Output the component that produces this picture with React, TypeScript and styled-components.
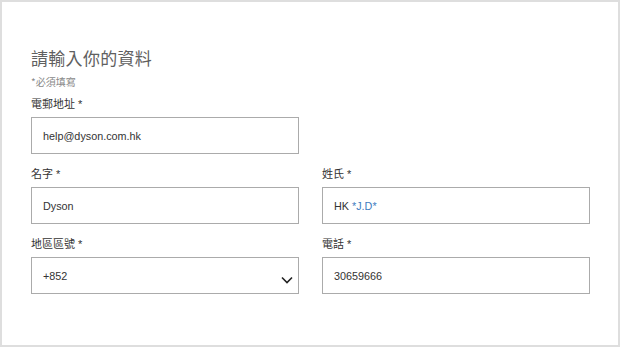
import React from 'react'
import styled, { createGlobalStyle } from 'styled-components'

const GlobalStyle = createGlobalStyle`
  html, body {
    margin: 0;
    padding: 0;
    background: #fff;
  }
  body {
    font-family: 'Liberation Sans', Arial, 'Noto Sans CJK TC', sans-serif;
  }
`

const Frame = styled.div`
  box-sizing: border-box;
  width: 620px;
  height: 347px;
  border: 2px solid #dedede;
  padding: 43px 28px 0 29px;
`

const Title = styled.h2`
  margin: 0;
  font-family: 'Noto Sans CJK TC', sans-serif;
  font-size: 17px;
  font-weight: 400;
  line-height: 26px;
  color: #606060;
  letter-spacing: 0.3px;
`

const Note = styled.div`
  margin-top: 4px;
  font-family: 'Noto Sans CJK TC', sans-serif;
  font-size: 10px;
  line-height: 14px;
  color: #8a8a8a;
`

const Grid = styled.div`
  display: grid;
  grid-template-columns: 268px 268px;
  column-gap: 23px;
  margin-top: 5px;
`

const Field = styled.div`
  display: flex;
  flex-direction: column;
`

const Label = styled.div<{ $first?: boolean }>`
  font-family: 'Liberation Sans', 'Noto Sans CJK TC', sans-serif;
  font-size: 11px;
  line-height: 16px;
  color: #333;
  padding-top: ${({ $first }) => ($first ? '2px' : '12px')};
  padding-bottom: 5px;
`

const Box = styled.div`
  position: relative;
  box-sizing: border-box;
  height: 37px;
  border: 1px solid #ababab;
  display: flex;
  align-items: center;
  padding-left: 11px;
  font-size: 10.8px;
  color: #333;
`

const Blue = styled.span`
  color: #3e7cc0;
`

const Chevron = styled.svg`
  position: absolute;
  right: 5px;
  top: 18px;
`

export default function App() {
  return (
    <>
      <GlobalStyle />
      <Frame>
        <Title>請輸入你的資料</Title>
        <Note>*必須填寫</Note>
        <Grid>
          <Field>
            <Label $first>電郵地址 *</Label>
            <Box>help@dyson.com.hk</Box>
          </Field>
          <div />
          <Field>
            <Label>名字 *</Label>
            <Box>Dyson</Box>
          </Field>
          <Field>
            <Label>姓氏 *</Label>
            <Box>
              HK&nbsp;<Blue>*J.D*</Blue>
            </Box>
          </Field>
          <Field>
            <Label>地區區號 *</Label>
            <Box>
              +852
              <Chevron width="12" height="8" viewBox="0 0 12 8">
                <path d="M1 1.5 L6 6.5 L11 1.5" fill="none" stroke="#222" strokeWidth="1.6" />
              </Chevron>
            </Box>
          </Field>
          <Field>
            <Label>電話 *</Label>
            <Box>30659666</Box>
          </Field>
        </Grid>
      </Frame>
    </>
  )
}
